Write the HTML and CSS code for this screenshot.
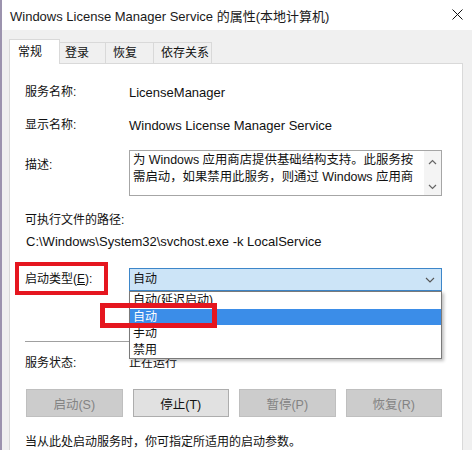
FILE: index.html
```html
<!DOCTYPE html>
<html lang="zh-CN">

<head>
  <meta charset="UTF-8">
  <title>Windows License Manager Service 的属性(本地计算机)</title>
  <link rel="stylesheet" href="styles.css">
</head>

<body>
  <div class="window">
    <!-- Title bar -->
    <div class="titlebar">
      <span class="title">Windows License Manager Service 的属性(本地计算机)</span>
      <svg class="close" width="11" height="11" viewBox="0 0 11 11">
        <path d="M0.5 0.5 L10.5 10.5 M10.5 0.5 L0.5 10.5" stroke="#111" stroke-width="1" fill="none"/>
      </svg>
    </div>

    <div class="dialog">
      <div class="tabs">
        <div class="tab active">常规</div>
        <div class="tab tab-login">登录</div>
        <div class="tab tab-recover">恢复</div>
        <div class="tab tab-deps">依存关系</div>
      </div>

      <div class="panel">
        <div class="row">
          <div class="label">服务名称:</div>
          <div class="value">LicenseManager</div>
        </div>
        <div class="row">
          <div class="label">显示名称:</div>
          <div class="value">Windows License Manager Service</div>
        </div>
        <div class="row desc-row">
          <div class="label">描述:</div>
          <div class="desc">
            <div class="desc-text">
              <div>为 Windows 应用商店提供基础结构支持。此服务按</div>
              <div>需启动，如果禁用此服务，则通过 Windows 应用商</div>
            </div>
            <div class="scrollbar">
              <svg width="9" height="6" viewBox="0 0 9 6"><path d="M1 5 L4.5 1.5 L8 5" stroke="#666" stroke-width="1.2" fill="none"/></svg>
              <svg width="9" height="6" viewBox="0 0 9 6"><path d="M1 1 L4.5 4.5 L8 1" stroke="#666" stroke-width="1.2" fill="none"/></svg>
            </div>
          </div>
        </div>

        <div class="path-label">可执行文件的路径:</div>
        <div class="path">C:\Windows\System32\svchost.exe -k LocalService</div>

        <div class="row combo-row">
          <div class="label">启动类型(<u>E</u>):</div>
          <div class="combo">
            <div class="combo-box">
              <span>自动</span>
              <svg width="10" height="6" viewBox="0 0 10 6"><path d="M1 1 L5 5 L9 1" stroke="#555" stroke-width="1.1" fill="none"/></svg>
            </div>
            <ul class="listbox">
              <li>自动(延迟启动)</li>
              <li class="selected">自动</li>
              <li>手动</li>
              <li>禁用</li>
            </ul>
          </div>
        </div>

        <div class="separator"></div>

        <div class="row status-row">
          <div class="label">服务状态:</div>
          <div class="value">正在运行</div>
        </div>

        <div class="buttons">
          <button disabled>启动(S)</button>
          <button class="default">停止(T)</button>
          <button disabled>暂停(P)</button>
          <button disabled>恢复(R)</button>
        </div>

        <p class="hint">当从此处启动服务时，你可指定所适用的启动参数。</p>
      </div>
    </div>

    <!-- red annotation boxes -->
    <div class="mark mark-type"></div>
    <div class="mark mark-auto"></div>
  </div>
</body>

</html>
```

FILE: styles.css
```css
/* dialog styles */
body {
  margin: 0;
  padding: 0;
  font-family: "Liberation Sans", "Noto Sans CJK SC", sans-serif;
  font-size: 13px;
  color: #111;
  background: #f0f0f0;
}

.window {
  position: relative;
  width: 472px;
  height: 450px;
  overflow: hidden;
  box-sizing: border-box;
  border-left: 2px solid #9c93ae;
}

.titlebar {
  height: 30px;
  background: #fff;
  display: flex;
  align-items: center;
  justify-content: space-between;
  padding: 0 9px 0 8px;
}

.title {
  font-size: 13px;
  color: #1a1a1a;
}

.close {
  margin-top: -1px;
}

.dialog {
  background: #f0f0f0;
  padding: 9px 9px 0 7px;
  height: 420px;
  box-sizing: border-box;
}

.tabs {
  display: flex;
  align-items: flex-end;
  height: 24px;
  padding-left: 2px;
}

.tab {
  height: 21px;
  line-height: 20px;
  box-sizing: border-box;
  padding-left: 6px;
  font-size: 12px;
  border: 1px solid #d9d9d9;
  border-bottom: none;
  border-left: none;
  background: #f0f0f0;
}

.tab.active {
  width: 51px;
  height: 25px;
  line-height: 25px;
  margin-left: -2px;
  margin-bottom: -1px;
  padding-left: 8px;
  background: #fff;
  border-left: 1px solid #d9d9d9;
  position: relative;
  z-index: 1;
}

.tab-login {
  width: 46px;
  padding-left: 5px;
}

.tab-recover {
  width: 48px;
  padding-left: 7px;
}

.tab-deps {
  width: 58px;
  padding-left: 7px;
}

.panel {
  background: #fff;
  border: 1px solid #d9d9d9;
  border-bottom: none;
  height: 390px;
  padding: 20px 20px 0 15px;
  box-sizing: border-box;
}

.row {
  display: flex;
  line-height: 17px;
  margin-top: 16px;
}

.row:first-child {
  margin-top: 0;
}

.label {
  width: 104px;
  flex: none;
  font-size: 12px;
}

.value {
  flex: 1;
}

.desc-row .label {
  padding-top: 7px;
}

.desc {
  flex: 1;
  height: 46px;
  box-sizing: border-box;
  border: 1px solid #a6a6a6;
  display: flex;
  overflow: hidden;
}

.desc-text {
  flex: 1;
  padding: 1px 0 0 3px;
  font-size: 12.4px;
  white-space: nowrap;
  overflow: hidden;
}

.scrollbar {
  width: 17px;
  background: #f4f4f4;
  display: flex;
  flex-direction: column;
  justify-content: space-between;
  align-items: center;
  padding: 8px 0 5px;
}

.path-label {
  margin-top: 16px;
  line-height: 17px;
  font-size: 12px;
}

.path {
  margin-top: 4px;
  line-height: 17px;
  padding-left: 1px;
}

.combo-row {
  margin-top: 18px;
  align-items: center;
}

.combo {
  flex: 1;
  position: relative;
}

.combo-box {
  height: 23px;
  box-sizing: border-box;
  border: 1px solid #3d86c9;
  background: #cce4f7;
  display: flex;
  align-items: center;
  justify-content: space-between;
  padding: 0 6px 0 3px;
  font-size: 12px;
}

.listbox {
  position: absolute;
  top: 100%;
  left: 0;
  right: 0;
  margin: 0;
  padding: 0;
  list-style: none;
  background: #fff;
  border: 1px solid #7a7a7a;
  box-shadow: 2px 2px 3px rgba(0, 0, 0, 0.25);
  z-index: 2;
}

.listbox li {
  height: 16.5px;
  line-height: 16.5px;
  padding-left: 3px;
  font-size: 12px;
}

.listbox li.selected {
  background: #3b8de8;
  color: #fff;
}

.separator {
  margin-top: 50px;
  border-top: 1px solid #a0a0a0;
}

.status-row {
  margin-top: 13px;
}

.status-row .value {
  font-size: 12px;
}

.buttons {
  display: grid;
  grid-template-columns: repeat(4, 1fr);
  gap: 10px;
  margin-top: 17px;
  padding-left: 1px;
}

.buttons button {
  height: 28px;
  font-family: inherit;
  font-size: 12.5px;
  border: 1px solid #adadad;
  background: #e1e1e1;
  color: #111;
  padding: 0;
}

.buttons button:disabled {
  background: #cccccc;
  border-color: #bfbfbf;
  color: #838383;
}

.hint {
  margin: 17px 0 0;
  line-height: 17px;
  font-size: 12px;
}

/* red annotation boxes */
.mark {
  position: absolute;
  border: 4px solid #e5161f;
  box-sizing: border-box;
  z-index: 5;
}

.mark-type {
  left: 13px;
  top: 262px;
  width: 93px;
  height: 33px;
}

.mark-auto {
  left: 98px;
  top: 303px;
  width: 117px;
  height: 25px;
  border-width: 5px;
}
```
